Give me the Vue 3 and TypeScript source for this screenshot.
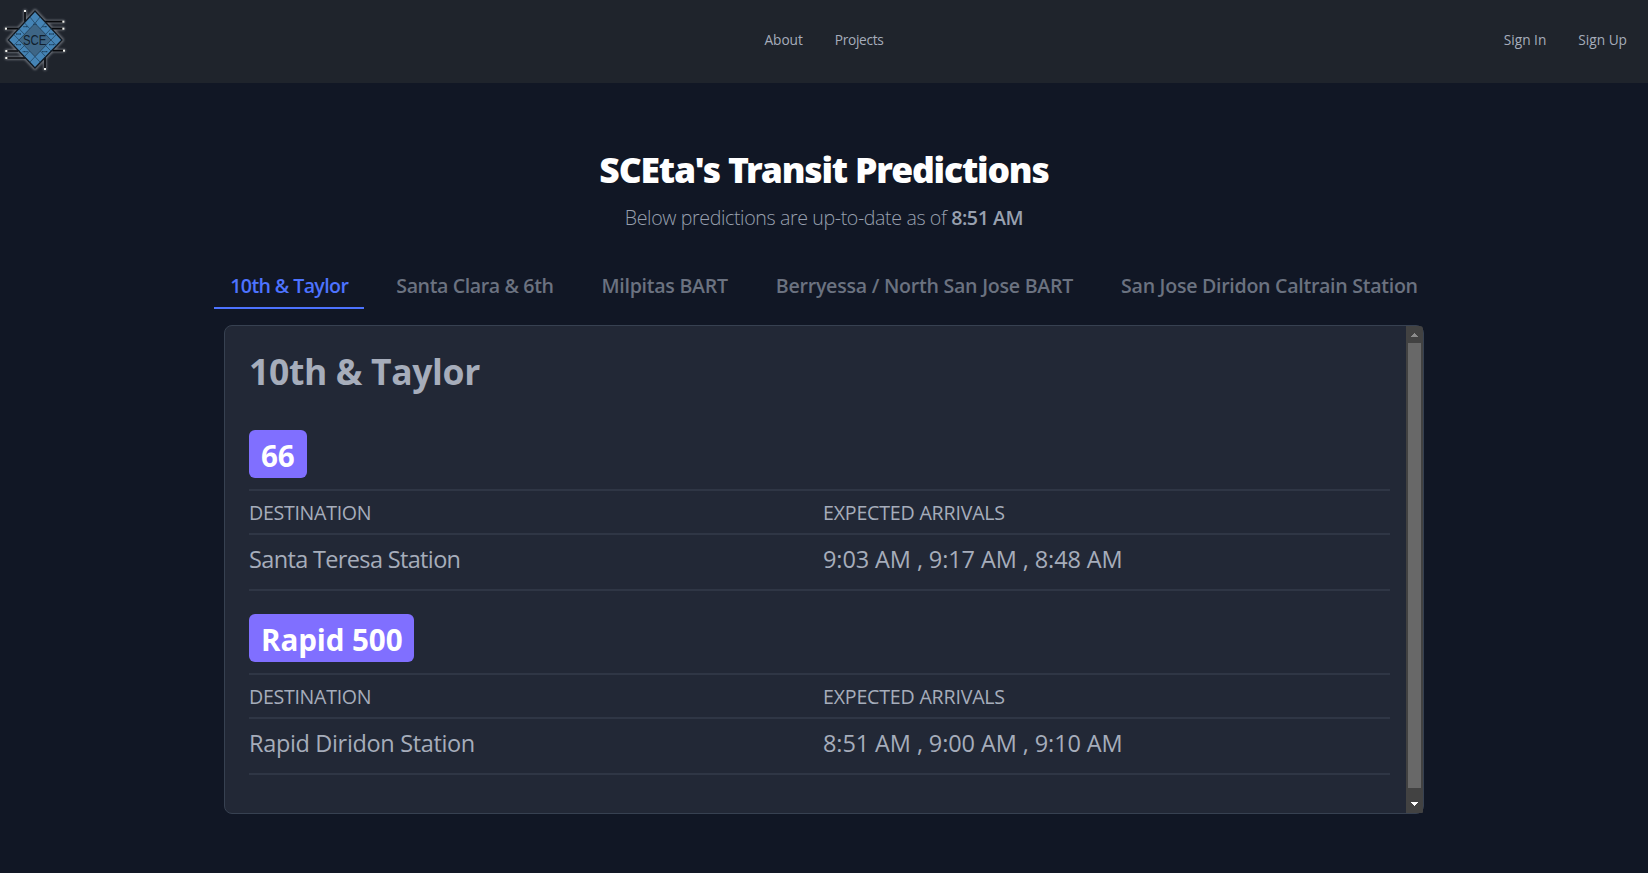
<script setup lang="ts">
import { computed, ref } from 'vue'

interface Prediction {
  destination: string
  arrivals: string[]
}

interface Route {
  name: string
  predictions: Prediction[]
}

interface Stop {
  name: string
  routes: Route[]
}

const updatedAt = '8:51 AM'

const stops: Stop[] = [
  {
    name: '10th & Taylor',
    routes: [
      {
        name: '66',
        predictions: [{ destination: 'Santa Teresa Station', arrivals: ['9:03 AM', '9:17 AM', '8:48 AM'] }],
      },
      {
        name: 'Rapid 500',
        predictions: [{ destination: 'Rapid Diridon Station', arrivals: ['8:51 AM', '9:00 AM', '9:10 AM'] }],
      },
    ],
  },
  { name: 'Santa Clara & 6th', routes: [] },
  { name: 'Milpitas BART', routes: [] },
  { name: 'Berryessa / North San Jose BART', routes: [] },
  { name: 'San Jose Diridon Caltrain Station', routes: [] },
]

const selected = ref(0)
const stop = computed(() => stops[selected.value])
</script>

<template>
  <div class="page">
    <header class="navbar">
      <a class="logo">
        <svg width="70" height="76" viewBox="0 0 210 228" aria-label="SCE">
          <g class="halo">
            <path d="M105 32 187 120 105 205 24 120Z" />
            <path d="M75 33V65M18 86H57M190 65H134M190 86H154M192 152H157M135 207V172M19 153H54M19 174H76" />
          </g>
          <path class="trace" d="M75 33V65M18 86H57M190 65H134M190 86H154M192 152H157M135 207V172M19 153H54M19 174H76" />
          <path class="chip" d="M105 33 186 120 105 204 25 120Z" />
          <path class="core" d="M105 70 153 120 105 170 57 120Z" />
          <path class="grid" d="M89 50 105 70 121 50M73 68 89 86M137 68 121 86M57 86 73 103M153 86 137 103M41 103 57 120 41 137M169 103 153 120 169 137M57 153 73 137M153 153 137 137M73 170 89 153M137 170 121 153M89 187 105 170 121 187" />
          <path class="pins" d="M70 80H84M127 80H141M48 102H63M147 102H162M48 134H63M147 134H164M68 155H84M126 155H143M99 73H111" />
          <text x="104" y="135" text-anchor="middle" textLength="70" lengthAdjust="spacingAndGlyphs">SCE</text>
          <g class="pads">
            <rect x="72" y="30" width="6" height="6" />
            <rect x="15" y="83" width="6" height="6" />
            <rect x="187" y="62" width="6" height="6" />
            <rect x="187" y="83" width="6" height="6" />
            <rect x="189" y="149" width="6" height="6" />
            <rect x="132" y="204" width="6" height="6" />
            <rect x="16" y="150" width="6" height="6" />
            <rect x="16" y="171" width="6" height="6" />
          </g>
        </svg>
      </a>
      <nav class="links center">
        <a class="about">About</a>
        <a class="projects">Projects</a>
      </nav>
      <nav class="links end">
        <a>Sign In</a>
        <a>Sign Up</a>
      </nav>
    </header>

    <main>
      <h1>SCEta's Transit Predictions</h1>
      <p class="subtitle">Below predictions are up-to-date as of <b>{{ updatedAt }}</b></p>

      <div class="tabs">
        <button
          v-for="(s, i) in stops"
          :key="s.name"
          type="button"
          :class="{ active: i === selected }"
          @click="selected = i"
        >{{ s.name }}</button>
      </div>

      <section class="card">
        <div class="content">
          <h2>{{ stop.name }}</h2>
          <article v-for="r in stop.routes" :key="r.name" class="route">
            <span class="badge">{{ r.name }}</span>
            <div class="row head">
              <span>DESTINATION</span>
              <span>EXPECTED ARRIVALS</span>
            </div>
            <div v-for="p in r.predictions" :key="p.destination" class="row body">
              <span class="destination">{{ p.destination }}</span>
              <span class="arrivals">{{ p.arrivals.join(' , ') }}</span>
            </div>
          </article>
        </div>
        <div class="scrollbar">
          <svg class="arrow up" width="17" height="17" viewBox="0 0 17 17" shape-rendering="crispEdges">
            <path d="M5 11V10H6V9H7V8H8V7H9V8H10V9H11V10H12V11Z" />
          </svg>
          <div class="thumb"></div>
          <svg class="arrow down" width="17" height="17" viewBox="0 0 17 17" shape-rendering="crispEdges">
            <path d="M5 6V7H6V8H7V9H8V10H9V9H10V8H11V7H12V6Z" />
          </svg>
        </div>
      </section>
    </main>
  </div>
</template>

<style>
body {
  margin: 0;
  background: #111725;
}
</style>

<style scoped>
* {
  box-sizing: border-box;
}

.page {
  height: 873px;
  overflow: hidden;
  background: #111725;
  color: #a6adbb;
  font-family: "Segoe UI", "Open Sans", "Noto Sans", sans-serif;
}

.navbar {
  display: grid;
  grid-template-columns: 1fr auto 1fr;
  height: 83px;
  background: #1f242c;
}

.logo {
  display: block;
  height: 76px;
}

.logo svg {
  display: block;
}

.halo {
  fill: none;
  stroke: #a3a8b0;
  stroke-width: 10;
  stroke-linejoin: round;
  stroke-linecap: round;
  opacity: 0.6;
  filter: blur(2.5px);
}

.trace {
  fill: none;
  stroke: #07090c;
  stroke-width: 5;
}

.chip {
  fill: #4584b5;
  stroke: #101820;
  stroke-width: 4;
}

.core {
  fill: #3e6686;
  stroke: #1b3448;
  stroke-width: 2;
}

.grid {
  fill: none;
  stroke: #1c3b54;
  stroke-width: 2;
}

.pins {
  fill: none;
  stroke: #1d4260;
  stroke-width: 4;
  stroke-dasharray: 3 1;
}

.pads {
  fill: #f3f3ee;
}

.logo text {
  fill: #10202d;
  font: 42px "Liberation Sans", sans-serif;
}

.links {
  display: flex;
  height: 80px;
  align-items: center;
  font-size: 13.7px;
  line-height: 20px;
}

.center {
  gap: 32px;
}

.end {
  justify-content: flex-end;
  gap: 32px;
  padding-right: 21px;
}

.about {
  letter-spacing: -0.06px;
}

.projects {
  letter-spacing: -0.3px;
}

main {
  display: flex;
  flex-direction: column;
  align-items: center;
}

h1 {
  margin: 66px 0 0;
  color: #fff;
  font: 900 35.5px/40px "Segoe UI", "Noto Sans", sans-serif;
  letter-spacing: -1.17px;
}

.subtitle {
  margin: 15px 0 0;
  font-size: 19.6px;
  font-weight: 300;
  line-height: 28px;
  letter-spacing: -0.38px;
  color: #98a0af;
}

.subtitle b {
  font-weight: 600;
  letter-spacing: -0.44px;
}

.tabs {
  display: flex;
  gap: 16px;
  margin-top: 32px;
}

.tabs button {
  height: 45px;
  padding: 1px 16px 0;
  border: 0;
  border-bottom: 2px solid transparent;
  background: none;
  color: #6b7280;
  font-family: inherit;
  font-size: 19.6px;
  font-weight: 600;
  line-height: 28px;
  white-space: nowrap;
}

.tabs button:nth-child(1) {
  letter-spacing: -0.62px;
}

.tabs button:nth-child(2) {
  letter-spacing: -0.39px;
}

.tabs button:nth-child(3) {
  letter-spacing: -0.28px;
}

.tabs button:nth-child(4) {
  letter-spacing: -0.25px;
}

.tabs button:nth-child(5) {
  letter-spacing: -0.29px;
}

.tabs button.active {
  border-color: #4d73ff;
  color: #4d73ff;
}

.card {
  display: flex;
  width: 1200px;
  height: 489px;
  margin-top: 16px;
  border: 1px solid #374151;
  border-radius: 8px;
  background: #222836;
}

.content {
  flex: 1;
  padding: 25px 16px 0 24px;
}

h2 {
  margin: 0 0 39px;
  font-size: 35.5px;
  font-weight: 700;
  line-height: 40px;
  letter-spacing: -0.35px;
}

.route {
  margin-bottom: 23px;
}

.badge {
  display: block;
  width: fit-content;
  height: 48px;
  margin-bottom: 11px;
  padding: 1px 12px 0;
  border-radius: 6px;
  background: #806fff;
  color: #fff;
  font-size: 29.6px;
  font-weight: 700;
  line-height: 50px;
  letter-spacing: -0.1px;
}

.row {
  display: grid;
  grid-template-columns: 574px 1fr;
}

.head {
  height: 46px;
  border-top: 2px solid #2f3645;
  border-bottom: 2px solid #2f3645;
  font-size: 19.6px;
  line-height: 44px;
  letter-spacing: -0.2px;
}

.head span:first-child {
  letter-spacing: -0.3px;
}

.body {
  height: 56px;
  border-bottom: 2px solid #2f3645;
  font-size: 23.5px;
  line-height: 48px;
}

.destination {
  letter-spacing: -0.34px;
}

.route:nth-of-type(1) .destination {
  letter-spacing: -0.65px;
}

.arrivals {
  letter-spacing: -0.1px;
}

.scrollbar {
  display: flex;
  flex-direction: column;
  width: 17px;
  background: #424242;
  border-radius: 0 3px 1px 0;
}

.thumb {
  flex: 1;
  margin: 0 2px 8px;
  background: #686868;
}

.arrow {
  display: block;
}

.up {
  fill: #8b8b8b;
}

.down {
  fill: #fff;
}
</style>
